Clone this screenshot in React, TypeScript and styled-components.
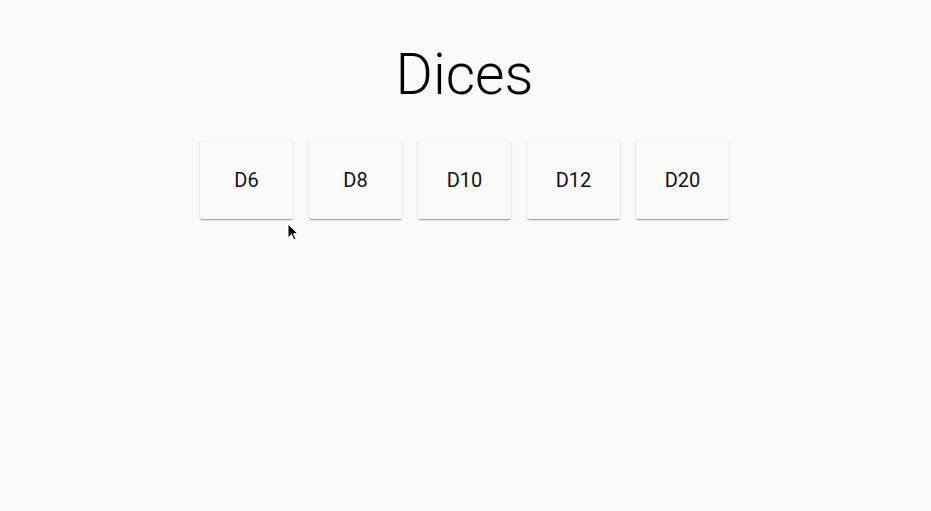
import React from "react";
import styled, { createGlobalStyle } from "styled-components";

const Global = createGlobalStyle`
  html, body { margin: 0; padding: 0; background: #fafafa; }
  body { font-family: Roboto, "Liberation Sans", sans-serif; color: #000; }
`;

const Page = styled.main`
  position: relative;
  min-height: 511px;
  display: flex;
  flex-direction: column;
  align-items: center;
  padding: 40px 2px 0 0;
  box-sizing: border-box;
`;

const Title = styled.h1`
  margin: 0;
  font-size: 57px;
  line-height: 70px;
  font-weight: 300;
  letter-spacing: 0;
`;

const Row = styled.div`
  display: flex;
  gap: 16px;
  margin-top: 31px;
`;

const DiceCard = styled.button`
  width: 93px;
  height: 78px;
  border: none;
  border-radius: 2px;
  background: #fafafa;
  box-shadow: 0 2px 1px -1px rgba(0,0,0,0.2), 0 1px 1px 0 rgba(0,0,0,0.14), 0 1px 3px 0 rgba(0,0,0,0.12);
  font-family: Roboto, "Liberation Sans", sans-serif;
  font-size: 20px;
  font-weight: 400;
  color: #111;
  display: flex;
  align-items: center;
  justify-content: center;
  padding: 0;
  cursor: pointer;
`;

const Cursor = styled.svg`
  position: absolute;
  left: 287px;
  top: 223px;
`;

const dice = ["D6", "D8", "D10", "D12", "D20"];

export default function App() {
  return (
    <>
      <Global />
      <Page>
        <Title>Dices</Title>
        <Row>
          {dice.map((d) => (
            <DiceCard key={d}>{d}</DiceCard>
          ))}
        </Row>
        <Cursor width="12" height="19" viewBox="0 0 12 19">
          <path d="M1 1 L1 15 L4.5 11.5 L7 17 L9 16 L6.5 10.8 L11 10.8 Z" fill="#000" stroke="#fff" strokeWidth="1" />
        </Cursor>
      </Page>
    </>
  );
}
